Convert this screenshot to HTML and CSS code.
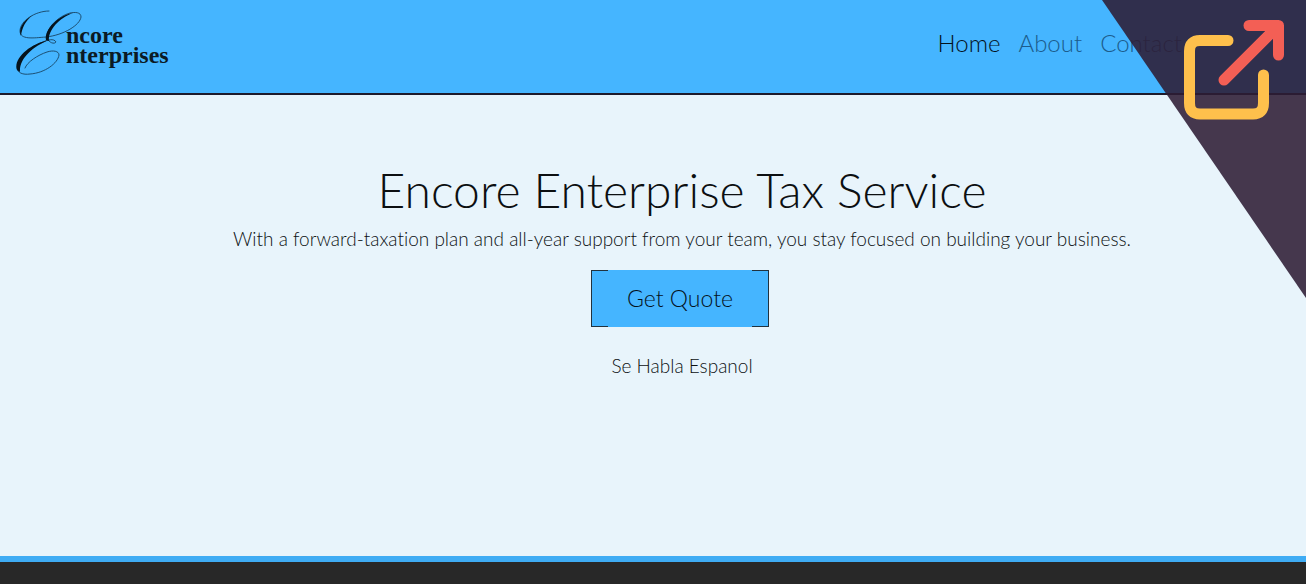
FILE: index.html
```html
<!DOCTYPE html>
<html lang="en">
<head>
<meta charset="utf-8">
<meta name="viewport" content="width=device-width, initial-scale=1">
<title>Encore Enterprise Tax Service</title>
<link rel="stylesheet" href="styles.css">
</head>
<body>
<header class="site-header">
  <a class="brand" href="#">
    <svg class="brand-mark" viewBox="0 0 68 68" aria-hidden="true">
      <g fill="none" stroke="#174463" stroke-linecap="round">
        <path stroke-width=".9" d="M33 2C19 2 4 12 4 22C4 31 17 29 30 28C48 26 64 16 65 8C65 3 59 3 54 4C43 7 31 18 31 27"/>
        <path stroke-width=".9" d="M31 27C31 33 38 36 40 33C38 29 31 31 27 33C13 38 2 49 1 58C1 64 7 66 14 65C29 64 42 54 43 46C43 42 37 41 31 43C22 46 11 53 9 59"/>
      </g>
      <g fill="#06131c">
        <path d="M57 4C43 6 28 20 30 31L33 32C32 21 43 9 57 4Z"/>
        <path d="M33 31C13 35-3 50 1 61L4 63C3 50 16 38 33 31Z"/>
        <path d="M17 6C6 12 2 21 5 27C6 19 9 12 17 6Z"/>
      </g>
    </svg>
    <span class="brand-name"><span>ncore</span><span>nterprises</span></span>
  </a>
  <nav class="site-nav">
    <a class="nav-link active" href="#">Home</a>
    <a class="nav-link" href="#">About</a>
    <a class="nav-link" href="#">Contact</a>
  </nav>
</header>
<main class="hero">
  <h1 class="hero-title">Encore Enterprise Tax Service</h1>
  <p class="hero-text">With a forward-taxation plan and all-year support from your team, you stay focused on building your business.</p>
  <button class="quote-button" type="button">Get Quote</button>
  <p class="hero-text">Se Habla Espanol</p>
</main>
<footer class="site-footer"></footer>
<a class="corner" href="#" aria-label="Open site">
  <svg class="corner-icon" viewBox="0 0 100 100" fill="none" stroke-width="11" stroke-linecap="round" stroke-linejoin="round" aria-hidden="true">
    <path stroke="#fec04c" d="M44 20.500H16Q5.500 20.500 5.500 31V83Q5.500 94 16 94H69Q79.500 94 79.500 83V55"/>
    <path stroke="#f35f55" d="M65 5.500H94.500V35M94 6L40 60"/>
  </svg>
</a>
</body>
</html>
```
FILE: styles.css
```css
* { box-sizing: border-box; }

body {
  margin: 0;
  min-height: 100vh;
  display: flex;
  flex-direction: column;
  background: #e8f4fb;
  color: #0c0f11;
  font-family: Lato, "Open Sans", sans-serif;
  font-weight: 300;
  font-variant-ligatures: none;
}

.site-header {
  display: flex;
  align-items: flex-start;
  justify-content: space-between;
  height: 95px;
  padding: 9px 124px 0 16px;
  background: #45b5ff;
  border-bottom: 2px solid #1d1a2b;
}

.brand {
  display: flex;
  color: #0b1a24;
  text-decoration: none;
}

.brand-mark {
  width: 68px;
  height: 68px;
  margin-right: -18px;
}

.brand-name {
  display: flex;
  flex-direction: column;
  padding-top: 16px;
  font-family: "Liberation Serif", serif;
  font-size: 24px;
  font-weight: 700;
  line-height: 20px;
}

.site-nav {
  display: flex;
  gap: 18px;
  padding-top: 20px;
}

.nav-link {
  color: #1c5c8c;
  font-size: 24px;
  line-height: 28px;
  text-decoration: none;
}

.nav-link.active { color: #04121c; }

.hero {
  flex: 1;
  display: flex;
  flex-direction: column;
  align-items: center;
  padding: 67px 0 0 58px;
  text-align: center;
}

.hero-title {
  margin: 0 0 9px;
  font-size: 48px;
  font-weight: 300;
  line-height: 56px;
}

.hero-text {
  margin: 0;
  color: #0c1012;
  font-size: 19px;
  line-height: 24px;
}

.quote-button {
  width: 178px;
  height: 57px;
  margin: 19px 4px 27px 0;
  padding: 0 0 2px;
  border: 1px solid #20323e;
  border-width: 0 1px;
  background:
    linear-gradient(#20323e, #20323e) 0 0 / 16px 1px no-repeat,
    linear-gradient(#20323e, #20323e) 100% 0 / 16px 1px no-repeat,
    linear-gradient(#20323e, #20323e) 0 100% / 16px 1px no-repeat,
    linear-gradient(#20323e, #20323e) 100% 100% / 16px 1px no-repeat,
    #45b5ff;
  color: #04121c;
  font: inherit;
  font-size: 23px;
}

.site-footer {
  height: 28px;
  border-top: 6px solid #3facf4;
  background: #282828;
}

.corner {
  position: absolute;
  top: 0;
  right: 0;
  width: 204px;
  height: 298px;
  padding: 20px 22px 0 0;
  background: rgba(45, 29, 52, 0.88);
  clip-path: polygon(0 0, 100% 0, 100% 100%);
}

.corner-icon {
  display: block;
  width: 100px;
  height: 100px;
  margin-left: auto;
}
```
